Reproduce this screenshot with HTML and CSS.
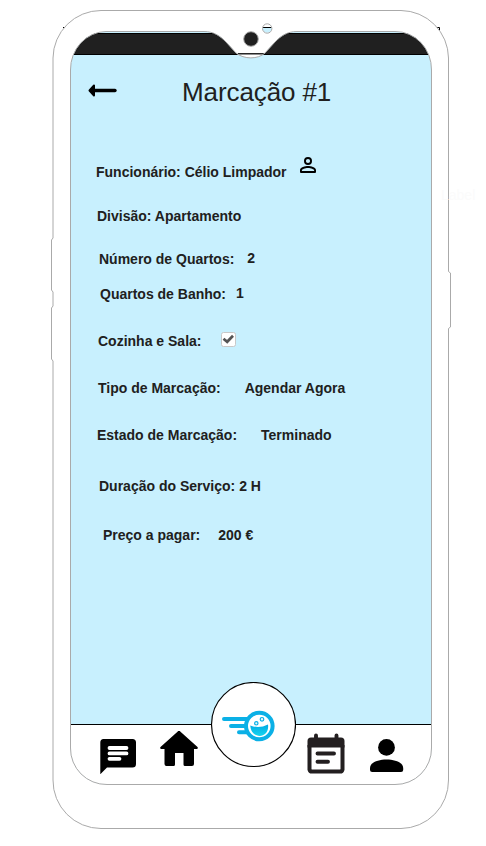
FILE: index.html
```html
<!DOCTYPE html>
<html lang="pt">
<head>
<meta charset="utf-8">
<title>Marcação #1</title>
<link rel="stylesheet" href="styles.css">
</head>
<body>
<div class="device">
  <svg class="frame" width="486" height="846" viewBox="0 0 486 846" aria-hidden="true">
    <defs>
      <path id="screen-shape" d="M106 31.500H204C214 31.500 220 36 226 42L236 53C244 59.500 258 59.500 265 53L275 42C281 36 287 31.500 297 31.500H395A36 38 0 0 1 431.500 70V748A36 36 0 0 1 395 784.500H107A36 36 0 0 1 70.500 748V70A36 38 0 0 1 106 31.500Z"/>
      <clipPath id="inner"><use href="#screen-shape"/></clipPath>
    </defs>
    <path d="M63 27.500h3v2M437 27.500h2.500v3" fill="none" stroke="#000"/>
    <path d="M101 10.500H401A48 48 0 0 1 448.500 58V271.500L450.500 273V327L448.500 328.500V780A48 48 0 0 1 401 828.500H101A48 48 0 0 1 53 780V361L51.500 359V308L53 306V292L51.500 290V240L53 238V58A48 48 0 0 1 101 10.500Z" fill="#fff" stroke="#aaa"/>
    <g clip-path="url(#inner)">
      <path d="M70 30h362v756H70z" fill="#c8f0fe"/>
      <path d="M70 33h362v21H70z" fill="#202020"/>
      <path d="M70 33.500h362M70 54.500h362" stroke="#000"/>
      <path d="M70 724h362v62H70z" fill="#fff"/>
      <path d="M70 724.500h362" stroke="#000"/>
    </g>
    <path d="M238 53.800h26" stroke="#000" stroke-width="1.300"/>
    <use href="#screen-shape" fill="none" stroke="#aaa"/>
    <circle cx="251" cy="39" r="7.300" fill="#202020" stroke="#aaa"/>
    <circle cx="267.200" cy="28.500" r="4.700" fill="#fff"/>
    <path d="M262.500 28h9.400a4.700 4.700 0 0 1-9.400 0z" fill="#c8f0fe"/>
    <path d="M263 27.500h8.500" stroke="#000"/>
    <circle cx="267.200" cy="28.500" r="4.700" fill="none" stroke="#aaa"/>
  </svg>

  <div class="screen">
    <header class="header">
      <svg class="back" width="29" height="13" viewBox="0 0 29 13"><path d="M6 6.500H27" stroke="#000" stroke-width="3.400" stroke-linecap="round"/><path d="M1.500 6.500L6 1.500V11.500Z" stroke="#000" stroke-width="2" stroke-linejoin="round"/></svg>
      <h1 class="title">Marcação #1</h1>
    </header>
    <main class="details">
      <div class="row employee"><span>Funcionário: Célio Limpador</span>
        <svg class="profile" width="16" height="16" viewBox="4 4 16 16"><path d="M12 5.900a2.100 2.100 0 1 1 0 4.200 2.100 2.100 0 0 1 0-4.200m0 9c2.970 0 6.100 1.460 6.100 2.100v1.100H5.900V17c0-.64 3.130-2.100 6.100-2.100M12 4a4 4 0 1 0 0 8 4 4 0 0 0 0-8zm0 9c-2.670 0-8 1.340-8 4v2q0 1 1 1h14q1 0 1-1v-2c0-2.660-5.330-4-8-4z"/></svg>
      </div>
      <div class="row division"><span>Divisão: Apartamento</span></div>
      <div class="row rooms"><span>Número de Quartos:</span><span class="count">2</span></div>
      <div class="row baths"><span>Quartos de Banho:</span><span class="count">1</span></div>
      <div class="row kitchen"><span>Cozinha e Sala:</span>
        <svg class="check" width="16" height="16" viewBox="0 0 16 16"><rect x=".5" y=".5" width="14" height="14" rx="2" fill="#fff" stroke="#c8c8c8"/><path d="M2.500 6.700L6.200 9.800L12 3.800" fill="none" stroke="#555" stroke-width="2.700"/></svg>
      </div>
      <div class="row type"><span>Tipo de Marcação:</span><span>Agendar Agora</span></div>
      <div class="row status"><span>Estado de Marcação:</span><span>Terminado</span></div>
      <div class="row duration"><span>Duração do Serviço:</span><span>2 H</span></div>
      <div class="row price"><span>Preço a pagar:</span><span>200 €</span></div>
    </main>
    <nav class="nav">
      <svg class="chat" width="36" height="36" viewBox="0 0 36 36"><path d="M3.500 0H32.500A3.500 3.500 0 0 1 36 3.500V25A3.500 3.500 0 0 1 32.500 28.500H7L.3 35.200V3.500A3.500 3.500 0 0 1 3.500 0Z"/><path d="M9.500 9H26.500M9.500 14.400H26.500M9.500 19.800H19.500" stroke="#fff" stroke-width="3.800" stroke-linecap="round"/></svg>
      <svg class="home" width="38" height="35" viewBox="0 0 38 35"><path d="M17.500.7a2 2 0 0 1 3 0L37.500 16q1 2-1 2H34V33q0 2-2 2H25q-1.500 0-1.500-1.500V22H15V33.500Q15 35 13.500 35H6.500Q4.500 35 4.500 33V18H1.500Q-.5 18 .5 16Z"/></svg>
      <svg class="logo" width="86" height="86" viewBox="0 0 86 86">
        <defs><linearGradient id="smile" x2="0" y2="1"><stop stop-color="#00a9e4"/><stop offset="1" stop-color="#16d5ef"/></linearGradient></defs>
        <circle cx="43.500" cy="42.500" r="42" fill="#fff" stroke="#000" stroke-width="1.150"/>
        <path d="M14 37H38M21 44H35M29 50.300H37" stroke="#0bb0e6" stroke-width="4" stroke-linecap="round"/>
        <circle cx="49.300" cy="44" r="13.300" fill="#fff" stroke="#0bb0e6" stroke-width="4"/>
        <path d="M40.300 43.500Q49 47 58 42.500C60 57 41 58 40.300 43.500Z" fill="url(#smile)"/>
        <g fill="#e1f8fe" stroke="#0bb0e6" stroke-width="1.200"><circle cx="46.300" cy="41.300" r="1.700"/><circle cx="52" cy="37.300" r="1.800"/></g>
      </svg>
      <svg class="calendar" width="38" height="42" viewBox="0 0 38 42"><g fill="none" stroke="#231f20"><path d="M2.500 12V36.500A2.500 2.500 0 0 0 5 38.500H33A2.500 2.500 0 0 0 35.500 36.500V12" stroke-width="4"/><path d="M9 2.500V8M29.500 2.500V8M10.500 20.500H27M10.500 28.800H21" stroke-width="3.900" stroke-linecap="round"/></g><path d="M4 4.500H34A3.500 3.500 0 0 1 37.500 8V14.500H.5V8A3.500 3.500 0 0 1 4 4.500Z" fill="#231f20"/></svg>
      <svg class="user" width="34" height="34" viewBox="0 0 34 34"><circle cx="16.500" cy="8.400" r="8.400"/><path d="M0 29C0 23.500 8 20.500 16.500 20.500S33.200 23.500 33.200 29V31Q33.200 33 31 33H2.200Q0 33 0 31Z"/></svg>
    </nav>
  </div>
  <span class="ghost">Label</span>
</div>
</body>
</html>
```
FILE: styles.css
```css
* { box-sizing: border-box; }
body { margin: 0; background: #fff; color: #202020; font-family: "Liberation Sans", Arial, sans-serif; }
.device { position: relative; width: 486px; height: 846px; overflow: hidden; padding: 55px 55px 0 71px; }
.frame { position: absolute; inset: 0; z-index: 0; }
.screen { position: relative; z-index: 1; width: 360px; height: 729px; display: flex; flex-direction: column; }
.header { height: 109px; display: flex; align-items: flex-start; padding: 21px 0 0 17px; }
.back { margin-top: 8px; flex: none; }
.title { margin: 0 0 0 65px; font-size: 26px; line-height: 32px; font-weight: 400; letter-spacing: -0.1px; white-space: nowrap; }
.details { height: 518px; font-size: 14px; line-height: 16px; font-weight: 700; }
.row { display: flex; height: 16px; white-space: nowrap; }
.employee { margin-left: 25px; gap: 13px; }
.profile { margin-top: -7px; }
.division { margin: 28px 0 0 26px; }
.rooms { margin: 27px 0 0 28px; gap: 13px; }
.count { margin-top: -1px; }
.baths { margin: 19px 0 0 29px; gap: 10px; }
.kitchen { margin: 31px 0 0 27px; gap: 20px; }
.check { margin-top: -1px; }
.type { margin: 31px 0 0 27px; gap: 24px; }
.status { margin: 31px 0 0 26px; gap: 24px; }
.duration { margin: 35px 0 0 28px; gap: 4px; }
.price { margin: 33px 0 0 32px; gap: 18px; }
.nav { display: flex; align-items: flex-start; height: 102px; padding-left: 29px; }
.nav svg { flex: none; }
.chat { margin-top: 57px; }
.home { margin: 49px 0 0 24px; }
.logo { margin-left: 12px; }
.calendar { margin: 51px 0 0 11px; }
.user { margin: 57px 0 0 25px; }
.ghost { position: absolute; left: 441px; top: 187px; color: #fbfbfb; font-size: 14px; line-height: 16px; }
```
